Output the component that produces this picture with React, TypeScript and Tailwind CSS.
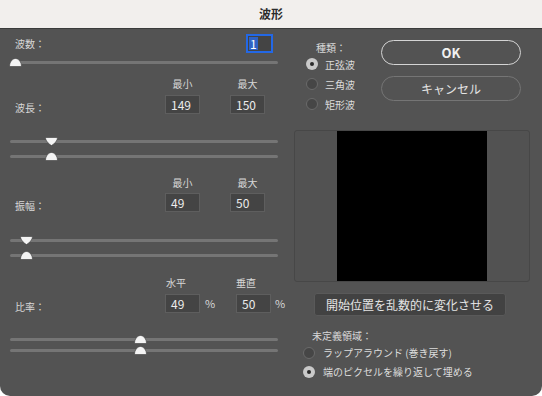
import React from "react";

const font = { fontFamily: '"Noto Sans CJK JP", "Noto Sans", sans-serif' };

// thumb shapes for the sliders
const UpThumb = () => (
  <svg width="13" height="9" viewBox="0 0 13 9">
    <path d="M0.5 8.5 C0.5 4 3.5 0.5 6.5 0.5 C9.5 0.5 12.5 4 12.5 8.5 Z" fill="#f4f4f4" stroke="#3a3a3a" strokeWidth="0.6" />
  </svg>
);

const DownThumb = () => (
  <svg width="13" height="9" viewBox="0 0 13 9">
    <path d="M0.5 0.5 L12.5 0.5 C12.5 3.5 9.5 7 6.5 8.5 C3.5 7 0.5 3.5 0.5 0.5 Z" fill="#f4f4f4" stroke="#3a3a3a" strokeWidth="0.6" />
  </svg>
);

interface SliderProps {
  at: number;
  down?: boolean;
  className?: string;
}

const Slider: React.FC<SliderProps> = ({ at, down, className = "" }) => (
  <div className={`relative h-[10px] ${className}`}>
    <div className="absolute left-0 right-0 top-[4px] h-[3px] rounded-full bg-[#757575]" />
    <div className="absolute top-[1px]" style={{ left: at - 6 }}>
      {down ? <DownThumb /> : <UpThumb />}
    </div>
  </div>
);

const NumBox: React.FC<{ value: string; className?: string }> = ({ value, className = "" }) => (
  <div className={`shrink-0 h-[19px] w-[35px] bg-[#444444] border border-[#5e5e5e] text-[12px] leading-[17px] text-[#ececec] pl-[5px] ${className}`}>
    {value}
  </div>
);

const Radio: React.FC<{ on?: boolean }> = ({ on }) =>
  on ? (
    <div className="w-[12px] h-[12px] rounded-full bg-[#c9c9c9] flex items-center justify-center">
      <div className="w-[4px] h-[4px] rounded-full bg-[#2a2a2a]" />
    </div>
  ) : (
    <div className="w-[12px] h-[12px] rounded-full bg-[#464646] border border-[#6a6a6a]" />
  );

const MinMaxHeader: React.FC<{ a: string; b: string }> = ({ a, b }) => (
  <div className="flex h-[14px] text-[10px] leading-[14px] text-[#d8d8d8]">
    <div className="w-[155px]" />
    <div className="w-[35px] text-center">{a}</div>
    <div className="w-[35px] ml-[30px] text-center">{b}</div>
  </div>
);

const MinMaxRow: React.FC<{ label: string; a: string; b: string }> = ({ label, a, b }) => (
  <div className="flex h-[19px]">
    <div className="w-[155px] shrink-0 pl-[5px] pt-[6px] text-[10px] leading-[14px] text-[#d8d8d8]">{label}</div>
    <NumBox value={a} />
    <NumBox value={b} className="ml-[30px]" />
  </div>
);

export default function App() {
  return (
    <div className="w-[542px] h-[396px] bg-white">
      <div className="w-[542px] h-[396px] bg-[#535353] rounded-b-[10px] overflow-hidden" style={font}>
        <div className="h-[29px] bg-[#f2efed] border-b border-[#3b3b3b] flex items-center justify-center text-[12px] font-bold text-[#2c2c2c]">
          波形
        </div>

        <div className="flex">
          {/* left column */}
          <div className="w-[268px] ml-[10px] shrink-0">
            <div className="mt-[5px] h-[19px] flex items-start justify-between">
              <div className="pl-[5px] pt-[3px] text-[10px] leading-[14px] text-[#d8d8d8]">波数：</div>
              <div className="mr-[5px] w-[27px] h-[19px] border-2 border-[#2368e6] bg-[#444444] pl-[1px] flex items-center">
                <span className="bg-[#2f62c4] text-white text-[12px] leading-[13px] px-[1px]">1</span>
              </div>
            </div>
            <Slider at={5} className="mt-[4px]" />

            <div className="mt-[10px]">
              <MinMaxHeader a="最小" b="最大" />
            </div>
            <div className="h-[4px]" />
            <MinMaxRow label="波長：" a="149" b="150" />
            <Slider at={41} down className="mt-[22px]" />
            <Slider at={41} className="mt-[5px]" />

            <div className="mt-[15px]">
              <MinMaxHeader a="最小" b="最大" />
            </div>
            <div className="h-[3px]" />
            <MinMaxRow label="振幅：" a="49" b="50" />
            <Slider at={16} down className="mt-[23px]" />
            <Slider at={16} className="mt-[5px]" />

            <div className="mt-[16px] flex h-[14px] text-[10px] leading-[14px] text-[#d8d8d8]">
              <div className="w-[156px] shrink-0" />
              <div className="w-[70px] shrink-0">水平</div>
              <div className="shrink-0">垂直</div>
            </div>
            <div className="mt-[4px] flex h-[19px]">
              <div className="w-[155px] shrink-0 pl-[5px] pt-[6px] text-[10px] leading-[14px] text-[#d8d8d8]">比率：</div>
              <NumBox value="49" />
              <div className="shrink-0 ml-[5px] w-[11px] text-[11px] leading-[19px] text-[#d8d8d8]">%</div>
              <NumBox value="50" className="ml-[20px]" />
              <div className="shrink-0 ml-[4px] text-[11px] leading-[19px] text-[#d8d8d8]">%</div>
            </div>
            <Slider at={130} className="mt-[21px]" />
            <Slider at={130} className="mt-[1px]" />
          </div>

          {/* right column */}
          <div className="w-[236px] ml-[16px] shrink-0">
            <div className="flex">
              <div className="w-[87px] pl-[12px]">
                <div className="mt-[12px] h-[13px] pl-[10px] text-[10px] leading-[13px] text-[#d8d8d8]">種類：</div>
                {[
                  ["正弦波", true],
                  ["三角波", false],
                  ["矩形波", false],
                ].map(([t, on]) => (
                  <div key={t as string} className="h-[20px] flex items-center gap-[7px]">
                    <Radio on={on as boolean} />
                    <span className="text-[10px] text-[#dcdcdc]">{t as string}</span>
                  </div>
                ))}
              </div>
              <div className="w-[140px]">
                <div className="mt-[11px] h-[25px] rounded-full border-[1.5px] border-[#d4d4d4] flex items-center justify-center text-[13px] font-bold text-[#f0f0f0]">
                  OK
                </div>
                <div className="mt-[11px] h-[25px] rounded-full border border-[#757575] flex items-center justify-center text-[12px] text-[#e4e4e4]">
                  キャンセル
                </div>
              </div>
            </div>

            <div className="mt-[16px] h-[152px] w-[236px] border border-[#474747] rounded-[3px] bg-[#525252] flex justify-center">
              <div className="w-[150px] h-full bg-black" />
            </div>

            <div className="mt-[11px] ml-[20px] w-[192px] h-[23px] rounded-[3px] bg-[#424242] border border-[#595959] flex items-center justify-center text-[12px] text-[#e4e4e4]">
              開始位置を乱数的に変化させる
            </div>

            <div className="mt-[13px] pl-[18px] h-[14px] text-[10px] leading-[14px] text-[#d8d8d8]">未定義領域：</div>
            <div className="pl-[9px]">
              <div className="h-[19px] flex items-center gap-[8px]">
                <Radio />
                <span className="text-[10px] text-[#dcdcdc]">ラップアラウンド (巻き戻す)</span>
              </div>
              <div className="h-[19px] flex items-center gap-[8px]">
                <Radio on />
                <span className="text-[10px] text-[#dcdcdc]">端のピクセルを繰り返して埋める</span>
              </div>
            </div>
          </div>
        </div>
      </div>
    </div>
  );
}
